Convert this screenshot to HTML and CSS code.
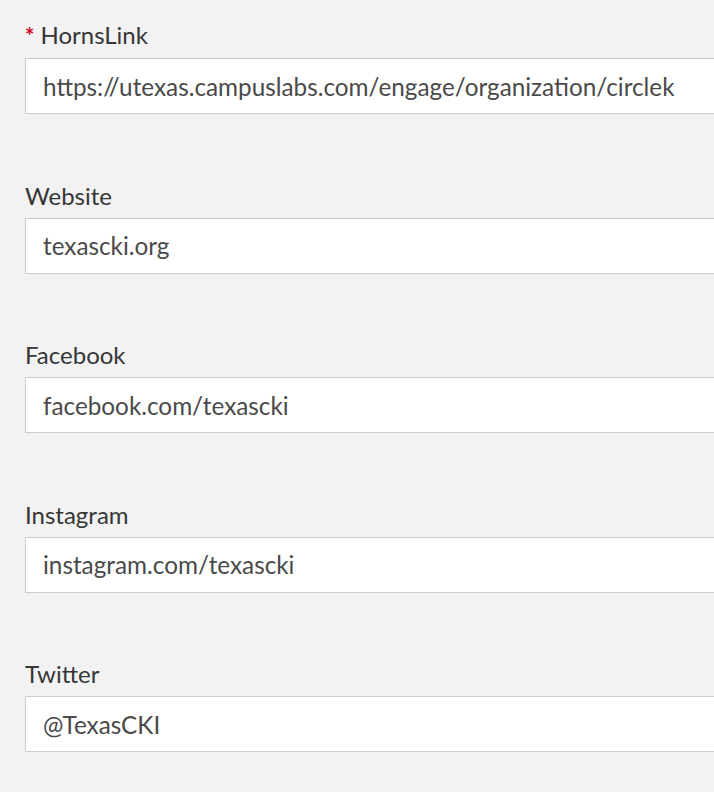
FILE: index.html
```html
<!DOCTYPE html>
<html lang="en">
<head>
  <meta charset="UTF-8">
  <meta name="viewport" content="width=device-width, initial-scale=1.0">
  <title>Organization Links</title>
  <link rel="stylesheet" href="styles.css">
</head>
<body>
  <form class="links-form">
    <div class="field">
      <label for="hornslink"><span class="required">*</span> HornsLink</label>
      <input type="text" id="hornslink" value="https://utexas.campuslabs.com/engage/organization/circlek">
    </div>

    <div class="field">
      <label for="website">Website</label>
      <input type="text" id="website" value="texascki.org">
    </div>

    <div class="field">
      <label for="facebook">Facebook</label>
      <input type="text" id="facebook" value="facebook.com/texascki">
    </div>

    <div class="field">
      <label for="instagram">Instagram</label>
      <input type="text" id="instagram" value="instagram.com/texascki">
    </div>

    <div class="field">
      <label for="twitter">Twitter</label>
      <input type="text" id="twitter" value="@TexasCKI">
    </div>
  </form>
</body>
</html>
```

FILE: styles.css
```css
body {
  font-family: Lato, "Open Sans", Arial, sans-serif;
  background-color: #f2f2f2;
  margin: 0;
  padding: 0;
  overflow: hidden;
}

.links-form {
  padding: 20px 0 0 25px;
}

.field {
  margin-bottom: 66.5px;
}

label {
  display: block;
  font-size: 24px;
  line-height: 30px;
  color: #363636;
  margin-bottom: 7px;
}

.required {
  color: #d0021b;
  font-weight: bold;
  font-size: 22px;
}

input[type="text"] {
  display: block;
  box-sizing: border-box;
  width: 720px;
  height: 56px;
  padding: 0 17px;
  font-family: inherit;
  font-size: 24.3px;
  color: #4a4a4a;
  background-color: #fff;
  border: 1px solid #cccccc;
  border-right: none;
  border-radius: 0;
  outline: none;
}
```
